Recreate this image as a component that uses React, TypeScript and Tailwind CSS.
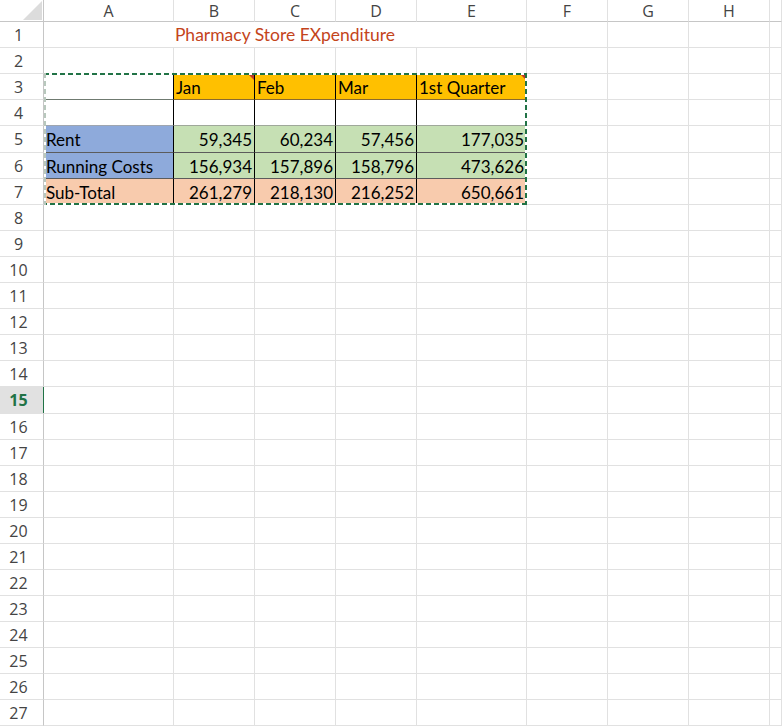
import React from "react";

const COLS = ["A", "B", "C", "D", "E", "F", "G", "H", ""];
const ROW_COUNT = 28;

const GRID = "#e1e1e1";
const HEAD_LINE = "#c6c6c6";

type Cell = {
  text?: string;
  bg?: string;
  right?: boolean;
  borderR?: string;
  borderB?: string;
  comment?: boolean;
};

const yellow = "#ffc000";
const green = "#c6e0b4";
const blue = "#8eaadb";
const peach = "#f8cbad";

// table rows 3..7, columns A..E
const table: Record<number, Cell[]> = {
  3: [
    { borderR: "#000", borderB: "#6f7a70" },
    { text: "Jan", bg: yellow, borderR: "#000", borderB: "#8a6a30", comment: true },
    { text: "Feb", bg: yellow, borderR: "#000", borderB: "#8a6a30" },
    { text: "Mar", bg: yellow, borderR: "#000", borderB: "#8a6a30" },
    { text: "1st Quarter", bg: yellow, borderR: "#000", borderB: "#8a6a30", comment: true },
  ],
  4: [
    { borderR: "#000", borderB: "#9fa6b0" },
    { borderR: "#000", borderB: "#9fa89a" },
    { borderR: "#000", borderB: "#9fa89a" },
    { borderR: "#000", borderB: "#9fa89a" },
    { borderR: "#000", borderB: "#9fa89a" },
  ],
  5: [
    { text: "Rent", bg: blue, borderR: "#000", borderB: "#5c5c5c" },
    { text: "59,345", bg: green, right: true, borderR: "#000", borderB: "#5c5c5c" },
    { text: "60,234", bg: green, right: true, borderR: "#000", borderB: "#5c5c5c" },
    { text: "57,456", bg: green, right: true, borderR: "#000", borderB: "#5c5c5c" },
    { text: "177,035", bg: green, right: true, borderR: "#000", borderB: "#5c5c5c" },
  ],
  6: [
    { text: "Running Costs", bg: blue, borderR: "#000", borderB: "#5c5c5c" },
    { text: "156,934", bg: green, right: true, borderR: "#000", borderB: "#5c5c5c" },
    { text: "157,896", bg: green, right: true, borderR: "#000", borderB: "#5c5c5c" },
    { text: "158,796", bg: green, right: true, borderR: "#000", borderB: "#5c5c5c" },
    { text: "473,626", bg: green, right: true, borderR: "#000", borderB: "#5c5c5c" },
  ],
  7: [
    { text: "Sub-Total", bg: peach, borderR: "#000" },
    { text: "261,279", bg: peach, right: true, borderR: "#000" },
    { text: "218,130", bg: peach, right: true, borderR: "#000" },
    { text: "216,252", bg: peach, right: true, borderR: "#000" },
    { text: "650,661", bg: peach, right: true, borderR: "#000" },
  ],
};

function DataCell({ cell }: { cell: Cell }) {
  return (
    <div
      className={`relative flex items-center overflow-hidden whitespace-nowrap border-r border-b px-[2px] text-[17px] leading-none text-black ${
        cell.right ? "justify-end" : "justify-start"
      }`}
      style={{
        background: cell.bg ?? "#fff",
        borderRightColor: cell.borderR ?? GRID,
        borderBottomColor: cell.borderB ?? GRID,
      }}
    >
      <span className="pt-[1px]">{cell.text}</span>
      {cell.comment && (
        <span className="absolute right-0 top-0 h-0 w-0 border-l-[6px] border-t-[6px] border-l-transparent border-t-[#c0392b]" />
      )}
    </div>
  );
}

function RowHeader({ n }: { n: number }) {
  const active = n === 15;
  return (
    <div
      className={`relative flex items-center justify-center border-b border-r pr-[6px] font-['Open_Sans',sans-serif] text-[16px] leading-none ${
        active ? "bg-[#e1e1e1] font-bold text-[#217346]" : "bg-white text-[#444]"
      }`}
      style={{ borderBottomColor: GRID, borderRightColor: HEAD_LINE }}
    >
      {n}
      {active && <span className="absolute right-[-2px] top-0 h-full w-[2px] bg-[#217346]" />}
    </div>
  );
}

export default function App() {
  const rows = Array.from({ length: ROW_COUNT }, (_, i) => i + 1);

  return (
    <div className="relative h-[726px] w-[782px] overflow-hidden bg-white font-['Lato',sans-serif]">
      <div className="grid grid-cols-[44px_130px_81px_81px_81px_110px_81px_81px_81px_1fr] grid-rows-[22px_repeat(4,26px)_27px_repeat(9,26px)_27px_repeat(13,26px)]">
        {/* corner */}
        <div className="relative border-b border-r bg-white" style={{ borderBottomColor: HEAD_LINE, borderRightColor: HEAD_LINE }}>
          <span className="absolute bottom-[1px] right-[1px] h-0 w-0 border-b-[19px] border-l-[19px] border-b-[#dcdcdc] border-l-transparent" />
        </div>
        {COLS.map((c, i) => (
          <div
            key={"h" + i}
            className="flex items-center justify-center border-b border-r bg-white font-['Open_Sans',sans-serif] text-[16px] leading-none text-[#444]"
            style={{ borderBottomColor: HEAD_LINE, borderRightColor: GRID }}
          >
            {c}
          </div>
        ))}

        {rows.map((r) => {
          const cells: React.ReactNode[] = [<RowHeader key={"r" + r} n={r} />];
          if (r === 1) {
            cells.push(
              <div
                key="title"
                className="col-span-5 flex items-center justify-center border-b border-r text-[17.5px] leading-none text-[#c4441b]"
                style={{ borderBottomColor: GRID, borderRightColor: GRID }}
              >
                <span>Pharmacy Store EXpenditure</span>
              </div>
            );
            for (let c = 5; c < 9; c++) cells.push(<DataCell key={r + "-" + c} cell={{}} />);
          } else if (table[r]) {
            table[r].forEach((cell, c) => cells.push(<DataCell key={r + "-" + c} cell={cell} />));
            for (let c = 5; c < 9; c++) cells.push(<DataCell key={r + "-" + c} cell={{}} />);
          } else {
            for (let c = 0; c < 9; c++) cells.push(<DataCell key={r + "-" + c} cell={{}} />);
          }
          return cells;
        })}
      </div>

      {/* copy marquee around A3:E7 */}
      <svg className="pointer-events-none absolute left-[44px] top-[73px]" width="483" height="132" viewBox="0 0 483 132">
        <rect x="1" y="1" width="481" height="130" fill="none" stroke="#ffffff" strokeWidth="2" />
        <path d="M0 1 H483 M482 0 V132 M483 131 H0" fill="none" stroke="#217346" strokeWidth="2" strokeDasharray="5 3" />
        <path d="M1 0 V132" fill="none" stroke="#b8c8bd" strokeWidth="2" strokeDasharray="5 3" />
      </svg>
    </div>
  );
}
